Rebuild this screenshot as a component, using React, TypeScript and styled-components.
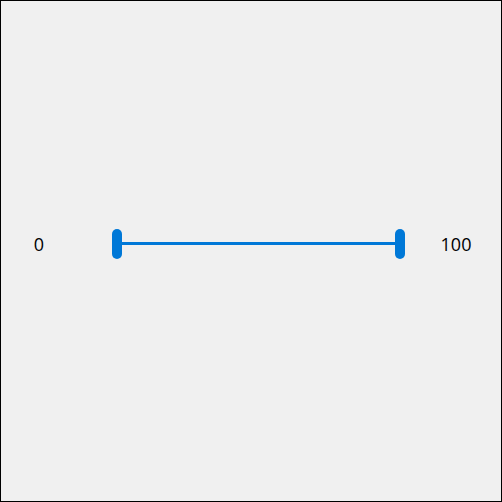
import React from 'react';
import styled, {createGlobalStyle} from 'styled-components';

const GlobalStyle = createGlobalStyle`
  body {
    margin: 0;
    font-family: "Open Sans", "Liberation Sans", sans-serif;
  }
`;

const Frame = styled.div`
  box-sizing: border-box;
  width: 502px;
  height: 502px;
  border: 1px solid #000;
  background: #f0f0f0;
  display: flex;
  align-items: center;
  padding-bottom: 14px;
`;

const Row = styled.div`
  display: flex;
  align-items: center;
  width: 100%;
`;

type LabelProps = {
    side: 'left' | 'right'
}

const Label = styled.div<LabelProps>`
  width: ${p => p.side === 'left' ? '76px' : 'auto'};
  flex: ${p => p.side === 'left' ? '0 0 auto' : '1'};
  padding-left: ${p => p.side === 'left' ? '0' : '6px'};
  text-align: center;
  font-size: 18px;
  line-height: 24px;
  color: #000;
`;

const Slider = styled.div`
  display: flex;
  align-items: center;
  width: 293px;
  height: 30px;
  margin-left: 35px;
`;

const Thumb = styled.div`
  width: 10px;
  height: 30px;
  border-radius: 5px;
  background: #0078d7;
  flex: 0 0 auto;
`;

const Track = styled.div`
  flex: 1;
  height: 3px;
  margin-top: -1px;
  background: #0078d7;
`;

export default function App() {
    const min = 0
    const max = 100

    return (
        <>
            <GlobalStyle/>
            <Frame>
                <Row>
                    <Label side="left">{min}</Label>
                    <Slider>
                        <Thumb/>
                        <Track/>
                        <Thumb/>
                    </Slider>
                    <Label side="right">{max}</Label>
                </Row>
            </Frame>
        </>
    );
}
